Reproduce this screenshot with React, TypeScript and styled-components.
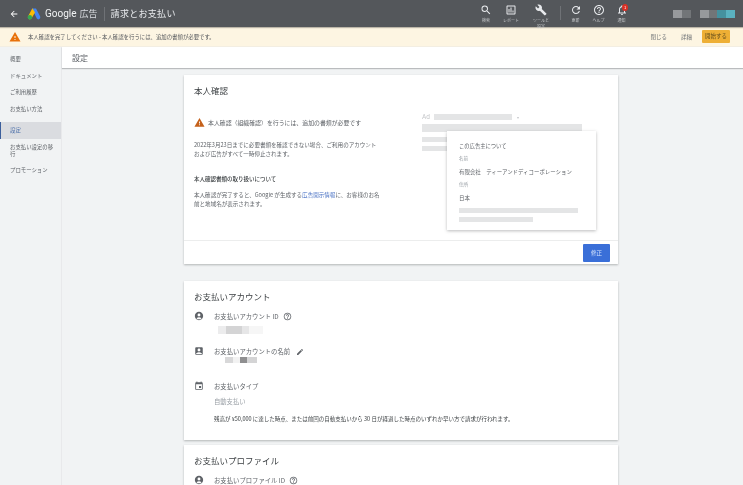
import styled, { createGlobalStyle } from "styled-components"
import {
  MdAccountBox,
  MdAccountCircle,
  MdArrowBack,
  MdBuild,
  MdEdit,
  MdEvent,
  MdHelpOutline,
  MdNotificationsNone,
  MdOutlineAssessment,
  MdRefresh,
  MdSearch,
  MdWarning,
} from "react-icons/md"

const GlobalStyle = createGlobalStyle`
  html, body {
    margin: 0;
    padding: 0;
    width: 743px;
    height: 485px;
    overflow: hidden;
    background: #f1f3f4;
    font-family: "Noto Sans CJK JP", "Noto Sans", sans-serif;
    color: #3c4043;
  }
  * { box-sizing: border-box; }
`

const tools = [
  { label: "検索", icon: <MdSearch />, width: 25 },
  { label: "レポート", icon: <MdOutlineAssessment />, width: 25 },
  { label: "ツールと設定", icon: <MdBuild />, width: 35 },
]

const actions = [
  { label: "更新", icon: <MdRefresh />, width: 23 },
  { label: "ヘルプ", icon: <MdHelpOutline />, width: 23 },
  { label: "通知", icon: <MdNotificationsNone />, width: 23, badge: true },
]

const navItems = ["概要", "ドキュメント", "ご利用履歴", "お支払い方法", "設定", "お支払い設定の移行", "プロモーション"]

export default function App() {
  return (
    <Page>
      <GlobalStyle />
      <Header>
        <BackIcon><MdArrowBack /></BackIcon>
        <svg width="14" height="13" viewBox="0 0 14 13">
          <path d="M5 1.5 L9 1.5 L13.2 9.6 A2 2 0 0 1 9.8 11.6 Z" fill="#4285f4" />
          <path d="M5.4 1.2 L8 5.4 L4.4 11.6 A2 2 0 0 1 1 9.6 Z" fill="#fbbc04" />
          <circle cx="2.9" cy="10.2" r="2.2" fill="#34a853" />
        </svg>
        <Brand>Google</Brand>
        <BrandJa>広告</BrandJa>
        <HeaderDivider />
        <HeaderTitle>請求とお支払い</HeaderTitle>
        <HeaderTools>
          {tools.map(t => (
            <Tool key={t.label} $width={t.width}>
              {t.icon}
              <ToolLabel>{t.label}</ToolLabel>
            </Tool>
          ))}
          <ToolDivider />
          {actions.map(t => (
            <Tool key={t.label} $width={t.width}>
              {t.icon}
              {t.badge && <Badge>1</Badge>}
              <ToolLabel>{t.label}</ToolLabel>
            </Tool>
          ))}
        </HeaderTools>
        <Masked>
          <MaskBlock $w={9} $c="#97999c" />
          <MaskBlock $w={9} $c="#727578" />
        </Masked>
        <Masked $indent={9}>
          <MaskBlock $w={9} $c="#97999c" />
          <MaskBlock $w={8} $c="#727578" />
          <MaskBlock $w={9} $c="#45919f" />
          <MaskBlock $w={9} $c="#5ab1c0" />
        </Masked>
      </Header>

      <Banner>
        <MdWarning color="#e8710a" size={12} />
        <BannerText>本人確認を完了してください - 本人確認を行うには、追加の書類が必要です。</BannerText>
        <BannerAction $gap={14}>閉じる</BannerAction>
        <BannerAction $gap={10}>詳細</BannerAction>
        <StartButton>開始する</StartButton>
      </Banner>

      <Body>
        <Sidebar>
          {navItems.map(item => (
            <NavItem key={item} $active={item === "設定"}>{item}</NavItem>
          ))}
        </Sidebar>

        <Main>
          <SubHeader>設定</SubHeader>
          <Content>
            <Card>
              <IdentityBody>
                <IdentityText>
                  <CardTitle>本人確認</CardTitle>
                  <AlertRow>
                    <MdWarning color="#c5611b" size={11} />
                    本人確認（組織確認）を行うには、追加の書類が必要です
                  </AlertRow>
                  <Paragraph>
                    2022年3月23日までに必要書類を確認できない場合、ご利用のアカウント<br />
                    および広告がすべて一時停止されます。
                  </Paragraph>
                  <SmallHeading>本人確認書類の取り扱いについて</SmallHeading>
                  <Paragraph>
                    本人確認が完了すると、Google が生成する<AdLink>広告開示情報</AdLink>に、お客様のお名<br />
                    前と地域名が表示されます。
                  </Paragraph>
                </IdentityText>

                <AdPreview>
                  <AdTopRow>
                    <AdMark>Ad</AdMark>
                    <GreyBar $w={78} $h={6} />
                    <AdCaret>▾</AdCaret>
                  </AdTopRow>
                  <GreyBar $w={160} $h={8} />
                  <AdLines>
                    <GreyBar $w={26} $h={5} />
                    <GreyBar $w={26} $h={5} />
                  </AdLines>
                  <AdPopup>
                    <PopupTitle>この広告主について</PopupTitle>
                    <PopupLabel>名前</PopupLabel>
                    <PopupValue>有限会社　ティーアンドディコーポレーション</PopupValue>
                    <PopupLabel>住所</PopupLabel>
                    <PopupValue>日本</PopupValue>
                    <PopupBars>
                      <GreyBar $w={119} $h={5} />
                      <GreyBar $w={74} $h={5} />
                    </PopupBars>
                  </AdPopup>
                </AdPreview>
              </IdentityBody>
              <CardFooter>
                <FixButton>修正</FixButton>
              </CardFooter>
            </Card>

            <Card>
              <AccountBody>
                <CardTitle>お支払いアカウント</CardTitle>
                <InfoRow $height={35}>
                  <RowIcon><MdAccountCircle /></RowIcon>
                  <RowText>
                    <RowLabel>お支払いアカウント ID <MdHelpOutline size={9} color="#5f6368" /></RowLabel>
                    <Masked $indent={4} $top={5}>
                      <MaskBlock $w={8} $c="#ececed" />
                      <MaskBlock $w={16} $c="#d4d4d5" />
                      <MaskBlock $w={7} $c="#e6e6e7" />
                      <MaskBlock $w={14} $c="#f6f6f6" />
                    </Masked>
                  </RowText>
                </InfoRow>
                <InfoRow $height={35}>
                  <RowIcon><MdAccountBox /></RowIcon>
                  <RowText>
                    <RowLabel>お支払いアカウントの名前 <EditIcon><MdEdit /></EditIcon></RowLabel>
                    <Masked $indent={11} $top={1}>
                      <MaskBlock $w={8} $h={6} $c="#d8d8d9" />
                      <MaskBlock $w={7} $h={6} $c="#f2f2f2" />
                      <MaskBlock $w={7} $h={6} $c="#8f8f90" />
                      <MaskBlock $w={10} $h={6} $c="#d4d4d5" />
                    </Masked>
                  </RowText>
                </InfoRow>
                <InfoRow>
                  <RowIcon><MdEvent /></RowIcon>
                  <RowText>
                    <RowLabel>お支払いタイプ</RowLabel>
                    <RowValue>自動支払い</RowValue>
                    <RowNote>残高が ¥50,000 に達した時点、または前回の自動支払いから 30 日が経過した時点のいずれか早い方で請求が行われます。</RowNote>
                  </RowText>
                </InfoRow>
              </AccountBody>
            </Card>

            <Card>
              <AccountBody>
                <CardTitle>お支払いプロファイル</CardTitle>
                <InfoRow>
                  <RowIcon><MdAccountCircle /></RowIcon>
                  <RowText>
                    <RowLabel>お支払いプロファイル ID <MdHelpOutline size={9} color="#5f6368" /></RowLabel>
                  </RowText>
                </InfoRow>
              </AccountBody>
            </Card>
          </Content>
        </Main>
      </Body>
    </Page>
  )
}

const Page = styled.div`
  width: 743px;
  height: 485px;
  display: flex;
  flex-direction: column;
  overflow: hidden;
  filter: blur(0.45px);
`

const Header = styled.header`
  height: 27px;
  flex: none;
  display: flex;
  align-items: center;
  padding: 0 8px 0 9px;
  background: #54575b;
  color: #fff;
  box-shadow: 0 1px 1px rgba(0, 0, 0, 0.25);
  z-index: 1;
`

const BackIcon = styled.span`
  display: flex;
  font-size: 10px;
  margin-right: 8px;
`

const Brand = styled.span`
  font-family: "Roboto", sans-serif;
  font-size: 10px;
  margin-left: 4px;
  color: #f1f3f4;
`

const BrandJa = styled.span`
  font-size: 9px;
  margin-left: 3px;
  color: #dadce0;
`

const HeaderDivider = styled.span`
  width: 1px;
  height: 14px;
  margin: 0 6px 0 6px;
  background: #6f7276;
`

const HeaderTitle = styled.span`
  font-size: 9px;
  letter-spacing: 0.3px;
  color: #e8eaed;
`

const HeaderTools = styled.div`
  display: flex;
  align-items: flex-start;
  height: 27px;
  margin-left: auto;
  margin-right: 40px;
`

const Tool = styled.div<{ $width: number }>`
  position: relative;
  width: ${p => p.$width}px;
  padding-top: 4px;
  display: flex;
  flex-direction: column;
  align-items: center;
  color: #e8eaed;

  svg {
    flex: none;
    font-size: 12px;
  }
`

const ToolLabel = styled.span`
  font-size: 4px;
  line-height: 6px;
  width: 18px;
  margin-top: 1px;
  text-align: center;
  color: #c4c6c9;
`

const ToolDivider = styled.span`
  width: 1px;
  height: 14px;
  margin: 6px 3px 0 1.5px;
  background: #6f7276;
`

const Badge = styled.span`
  position: absolute;
  top: 4px;
  left: 12px;
  width: 6px;
  height: 7px;
  border-radius: 50%;
  background: #d93025;
  font-size: 4px;
  line-height: 7px;
  text-align: center;
  color: #fff;
`

const Masked = styled.div<{ $indent?: number; $top?: number }>`
  display: flex;
  margin-left: ${p => p.$indent ?? 0}px;
  margin-top: ${p => p.$top ?? 0}px;
`

const MaskBlock = styled.span<{ $w: number; $h?: number; $c: string }>`
  display: block;
  width: ${p => p.$w}px;
  height: ${p => p.$h ?? 8}px;
  background: ${p => p.$c};
`

const Banner = styled.div`
  height: 20px;
  flex: none;
  display: flex;
  align-items: center;
  padding: 0 13px 0 9px;
  background: #fdf5e2;
  border-bottom: 1px solid #f3eee2;
`

const BannerText = styled.span`
  font-size: 5.4px;
  margin-left: 7px;
  margin-right: auto;
  color: #54575b;
`

const BannerAction = styled.span<{ $gap: number }>`
  font-size: 5.5px;
  margin-right: ${p => p.$gap}px;
  color: #6b6f73;
`

const StartButton = styled.span`
  width: 28px;
  height: 13px;
  border-radius: 1px;
  background: #eeaf35;
  font-size: 5.5px;
  line-height: 13px;
  text-align: center;
  color: #5f4a1c;
`

const Body = styled.div`
  flex: 1;
  min-height: 0;
  display: flex;
`

const Sidebar = styled.nav`
  width: 62px;
  flex: none;
  padding-top: 4px;
  background: #f1f3f4;
  border-right: 1px solid #e8e9eb;
`

const NavItem = styled.div<{ $active?: boolean }>`
  min-height: 16.5px;
  padding: 5px 5px 3.5px 9px;
  font-size: 5.4px;
  line-height: 7.5px;
  margin-top: ${p => (p.$active ? "5px" : 0)};
  color: ${p => (p.$active ? "#4a6ea8" : "#5f6368")};
  background: ${p => (p.$active ? "#dadce0" : "transparent")};
  border-left: ${p => (p.$active ? "1px solid #3c5f9c" : "1px solid transparent")};
`

const Main = styled.main`
  flex: 1;
  min-width: 0;
  display: flex;
  flex-direction: column;
`

const SubHeader = styled.div`
  height: 21px;
  flex: none;
  padding-left: 10px;
  background: #fff;
  box-shadow: 0 1px 1px rgba(60, 64, 67, 0.3);
  font-size: 8px;
  line-height: 21px;
  color: #5f6368;
`

const Content = styled.div`
  flex: 1;
  min-height: 0;
  padding: 7px 125px 0 122px;
  display: flex;
  flex-direction: column;
  gap: 17px;
  overflow: hidden;

  & > :nth-child(3) {
    margin-top: -12px;
  }
`

const Card = styled.section`
  flex: none;
  background: #fff;
  box-shadow: 0 1px 2px rgba(60, 64, 67, 0.35);
`

const IdentityBody = styled.div`
  height: 165px;
  padding: 0 0 0 10px;
  display: flex;
`

const IdentityText = styled.div`
  width: 190px;
  flex: none;
`

const CardTitle = styled.h2`
  margin: 0;
  padding-top: 9px;
  font-size: 8.5px;
  line-height: 13px;
  font-weight: 400;
  color: #3c4043;
`

const AlertRow = styled.div`
  display: flex;
  align-items: center;
  gap: 3px;
  margin-top: 20px;
  font-size: 5.9px;
  line-height: 10px;
  white-space: nowrap;
  color: #5f6368;
`

const Paragraph = styled.p`
  margin: 13px 0 0;
  font-size: 5.55px;
  line-height: 9px;
  white-space: nowrap;
  color: #5f6368;
`

const SmallHeading = styled.h3`
  margin: 16px 0 0;
  font-size: 5.5px;
  line-height: 8px;
  font-weight: 500;
  color: #3c4043;

  & + p {
    margin-top: 8px;
  }
`

const AdLink = styled.span`
  color: #4a72c4;
`

const AdPreview = styled.div`
  position: relative;
  margin: 38px 0 0 38px;
  width: 165px;
`

const AdTopRow = styled.div`
  display: flex;
  align-items: center;
  height: 7px;
  margin-bottom: 4px;
  gap: 4.5px;
`

const AdMark = styled.span`
  font-family: "Roboto", sans-serif;
  font-size: 6.5px;
  color: #c4c6c9;
`

const AdCaret = styled.span`
  font-size: 4px;
  color: #c4c6c9;
`

const GreyBar = styled.div<{ $w: number; $h: number }>`
  width: ${p => p.$w}px;
  height: ${p => p.$h}px;
  background: #e4e5e6;
`

const AdLines = styled.div`
  display: flex;
  flex-direction: column;
  gap: 4px;
  margin-top: 5px;
`

const AdPopup = styled.div`
  position: absolute;
  left: 25px;
  top: 18px;
  width: 149px;
  height: 99px;
  padding: 11px 12px 0;
  background: #fff;
  box-shadow: 0 1px 3px rgba(60, 64, 67, 0.35);
`

const PopupTitle = styled.div`
  font-size: 5.3px;
  line-height: 8px;
  color: #5f6368;
`

const PopupLabel = styled.div`
  margin-top: 5px;
  font-size: 4.6px;
  line-height: 7px;
  color: #9aa0a6;
`

const PopupValue = styled.div`
  margin-top: 6px;
  font-size: 5.45px;
  line-height: 8px;
  white-space: nowrap;
  color: #5f6368;
`

const PopupBars = styled.div`
  display: flex;
  flex-direction: column;
  gap: 4px;
  margin-top: 6px;
`

const CardFooter = styled.div`
  height: 24px;
  display: flex;
  justify-content: flex-end;
  align-items: center;
  padding-right: 8px;
  border-top: 1px solid #eceded;
`

const FixButton = styled.span`
  width: 27px;
  height: 18px;
  margin-top: 1px;
  border-radius: 1px;
  background: #3a6fd8;
  font-size: 5.5px;
  line-height: 18px;
  text-align: center;
  color: #cfe0fb;
`

const AccountBody = styled.div`
  min-height: 159px;
  padding: 0 10px;

  section:last-child & {
    min-height: 40px;
  }

  h2 + div {
    margin-top: 9px;
  }
`

const InfoRow = styled.div<{ $height?: number }>`
  display: flex;
  height: ${p => (p.$height ? `${p.$height}px` : "auto")};
`

const RowIcon = styled.span`
  width: 20px;
  flex: none;
  display: flex;
  font-size: 10px;
  color: #5f6368;
  svg { margin-top: -1px; }
`

const RowText = styled.div`
  min-width: 0;
`

const RowLabel = styled.div`
  display: flex;
  align-items: center;
  gap: 4px;
  font-size: 6.35px;
  line-height: 9px;
  color: #5f6368;
`

const EditIcon = styled.span`
  display: flex;
  font-size: 8px;
  margin-left: 2px;
  color: #5f6368;
`

const RowValue = styled.div`
  margin-top: 7px;
  font-size: 6.3px;
  line-height: 8px;
  color: #9aa0a6;
`

const RowNote = styled.div`
  margin-top: 9px;
  font-size: 5.5px;
  line-height: 8px;
  white-space: nowrap;
  color: #3c4043;
`
